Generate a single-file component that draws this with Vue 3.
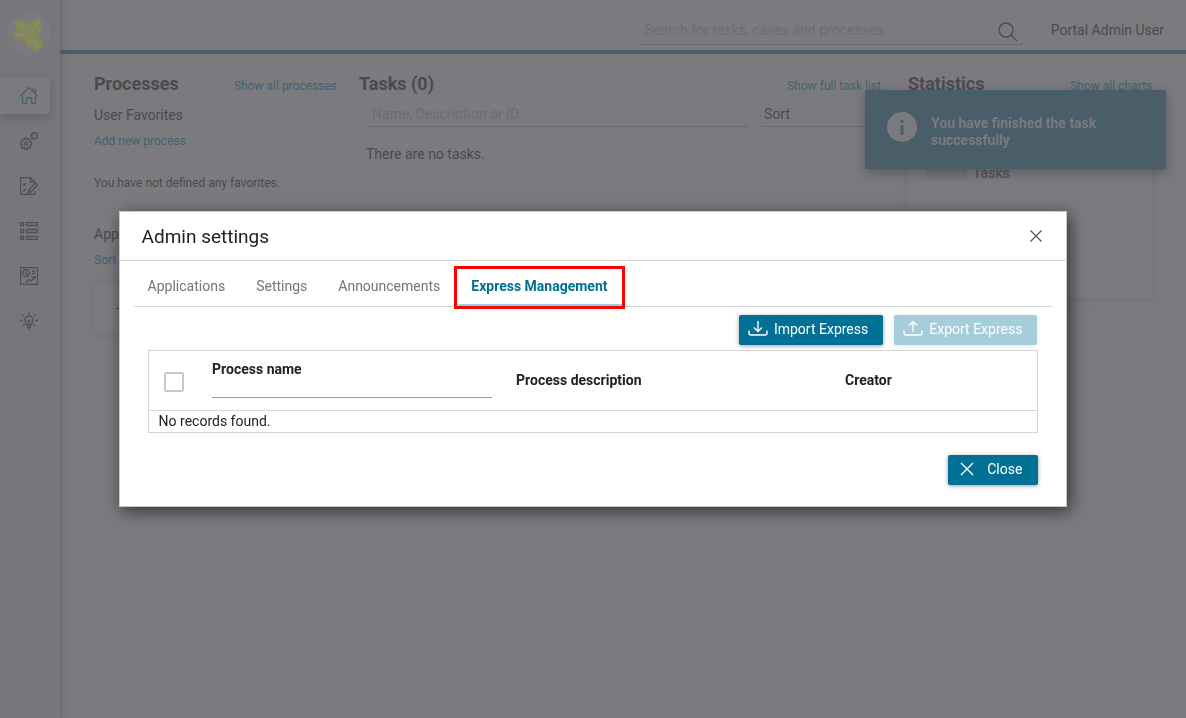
<template>
    <div class="portal">
        <aside class="sidebar">
            <svg class="logo" viewBox="0 0 42 42">
                <circle cx="21" cy="21" r="20.5" fill="#7a797e" stroke="#848388" stroke-dasharray="3 2" />
                <path d="M7 8c4-2 10 0 12 4 3-4 8-7 14-6 2 6 1 12-3 16 4 3 6 7 5 12-4 0-5 2-6 5-5-1-11-4-11-10-6-1-12-2-13-8 1-3 3-3 3-6-1-2-2-5-1-7z" fill="#84875a" />
                <path d="M9 10l9 10M31 8L21 20M8 21l11 1M23 24l7 12M12 12v4M15 11v4M28 10v4h4M25 14v4M12 19l-2 4M16 20l-2 5M24 29h-4M27 27v5h5" fill="none" stroke="#959780" stroke-width="0.6" />
            </svg>
            <nav class="menu">
                <a
                    v-for="item in menu"
                    :key="item.id"
                    href="#"
                    class="menu-item"
                    :class="{ active: item.id === 'home' }"
                    :aria-label="item.id"
                >
                    <svg viewBox="0 0 18 18"><path :d="item.icon" /></svg>
                </a>
            </nav>
        </aside>

        <div class="page">
            <header class="topbar">
                <div class="search">
                    <input type="text" aria-label="Search" placeholder="Search for tasks, cases and processes">
                    <svg viewBox="0 0 20 20">
                        <circle cx="8" cy="8" r="7" />
                        <path d="M13 13l6 6" />
                    </svg>
                </div>
                <a href="#" class="user">Portal Admin User</a>
            </header>

            <main class="columns">
                <section class="processes">
                    <div class="section-head">
                        <h2>Processes</h2>
                        <a href="#">Show all processes</a>
                    </div>
                    <h3>User Favorites</h3>
                    <a href="#" class="small-link">Add new process</a>
                    <p class="hint">You have not defined any favorites.</p>
                    <h3>Applications</h3>
                    <a href="#" class="small-link">Sort</a>
                    <div class="process-card">-</div>
                </section>

                <section class="tasks">
                    <div class="section-head">
                        <h2>Tasks (0)</h2>
                        <a href="#">Show full task list</a>
                    </div>
                    <div class="filters">
                        <input type="text" aria-label="Filter tasks" placeholder="Name, Description or ID">
                        <button type="button" class="sort">Sort</button>
                    </div>
                    <p class="empty">There are no tasks.</p>
                </section>

                <section class="statistics">
                    <div class="section-head">
                        <h2>Statistics</h2>
                        <a href="#">Show all charts</a>
                    </div>
                    <div class="chart-card">
                        <div class="legend">
                            <span class="swatch"></span>
                            <span>Tasks</span>
                        </div>
                    </div>
                </section>
            </main>
        </div>

        <div class="toast" role="status">
            <span class="toast-icon">
                <svg viewBox="0 0 30 30">
                    <circle cx="15" cy="15" r="15" fill="#7b7a7f" />
                    <path d="M13.5 8h3v3h-3zM13.5 13h3v10h-3z" fill="#495e69" />
                </svg>
            </span>
            <strong>You have finished the task successfully</strong>
        </div>

        <div class="overlay">
            <div class="dialog" role="dialog" aria-labelledby="dialog-title">
                <div class="dialog-head">
                    <h1 id="dialog-title">Admin settings</h1>
                    <button type="button" class="dismiss" aria-label="Dismiss">
                        <svg viewBox="0 0 12 12"><path d="M0.5 0.5l11 11M11.5 0.5l-11 11" /></svg>
                    </button>
                </div>

                <div class="tabs" role="tablist">
                    <button
                        v-for="tab in tabs"
                        :key="tab"
                        type="button"
                        role="tab"
                        class="tab"
                        :class="{ selected: tab === activeTab }"
                        :aria-selected="tab === activeTab"
                        @click="activeTab = tab"
                    >
                        {{ tab }}
                    </button>
                </div>

                <div class="dialog-body">
                    <div class="actions">
                        <button type="button" class="btn">
                            <svg viewBox="0 0 20 16"><path d="M10 0v10M6 6.5l4 4 4-4M1 9.5v2.5q0 2 2 2h14q2 0 2-2V9.5" /></svg>
                            Import Express
                        </button>
                        <button type="button" class="btn" disabled>
                            <svg viewBox="0 0 20 16"><path d="M10 11V1M6 4.5l4-4 4 4M1 9.5v2.5q0 2 2 2h14q2 0 2-2V9.5" /></svg>
                            Export Express
                        </button>
                    </div>

                    <table>
                        <thead>
                            <tr>
                                <th class="col-check"><input type="checkbox" aria-label="Select all"></th>
                                <th class="col-name">
                                    <label for="name-filter">Process name</label>
                                    <input id="name-filter" type="text">
                                </th>
                                <th class="col-description">Process description</th>
                                <th>Creator</th>
                            </tr>
                        </thead>
                        <tbody>
                            <tr>
                                <td colspan="4">No records found.</td>
                            </tr>
                        </tbody>
                    </table>

                    <div class="dialog-foot">
                        <button type="button" class="btn close">
                            <svg viewBox="0 0 14 14"><path d="M1 1l12 12M13 1L1 13" /></svg>
                            Close
                        </button>
                    </div>
                </div>
            </div>
        </div>
    </div>
</template>

<script setup>
import { ref } from 'vue'

const tabs = ['Applications', 'Settings', 'Announcements', 'Express Management']
const activeTab = ref('Express Management')

const menu = [
    {
        id: 'home',
        icon: 'M0.5 9L9 0.5 17.5 9M12 2.5h3.500v4M2.500 9v7.500h4v-5.500h5v5.500h4V9'
    },
    {
        id: 'processes',
        icon: 'M5 6h2l.4 1.600 1.600-.6 1.500 1.500-.8 1.500 1.800.7v2l-1.800.7.8 1.500L9 16.400l-1.600-.8L7 17.500H5l-.6-1.900-1.500.8-1.500-1.500.8-1.500-1.700-.7v-2l1.700-.7-.8-1.500L2.900 7l1.500.6zM4.500 11.700a1.500 1.500 0 1 0 3 0a1.500 1.500 0 1 0-3 0M13 .5h2l.4 1.200 1.600.2.500 1.700-1 1 .3 1.400-1.500 1-1.300-.8-1.500.8-1.300-1.200.6-1.300-.9-1.200.8-1.600 1.200.1zM13.500 3.700h1'
    },
    {
        id: 'tasks',
        icon: 'M15 7V5L10.500 .5H2Q.5 .5 .5 2v14q0 1.500 1.500 1.500h12q1 0 1-1V14M10.500 .5V5H15M3 7.500l1 1 2-2.500M3 13l1 1 2-2.500M8 16l1-3.500L15.500 6l2 2L11 14.800zM9 12.500l2 2'
    },
    {
        id: 'cases',
        icon: 'M.5 .5h3v3h-3zM6.500 .5h11v3h-11zM.5 7.500h3v3h-3zM6.500 7.500h11v3h-11zM.5 14.500h3v3h-3zM6.500 14.500h11v3h-11z'
    },
    {
        id: 'statistics',
        icon: 'M.5 .5h17v17H.5zM6 2.500a3.500 3.500 0 1 0 .1 0zM6 2.500V6l2 2.500M12 4h3M12 6.500h3M6 15.500l3-3 2 1.500 4-4M12.500 10H15v2'
    },
    {
        id: 'tips',
        icon: 'M7 13.500C7 11.500 5 11 5 8a4 4 0 0 1 8 0c0 3-2 3.500-2 5.500zM7 15.500h4M8 17.500h2M9 13V9.500L7.500 8M9 9.500L10.500 8M9 0v2M2.500 2.500L4 4M15.500 2.500L14 4M0 8.500h2.500M15.500 8.500H18M3 14l1.500-1.500M15 14l-1.500-1.500'
    }
]
</script>

<style>
body {
    margin: 0;
    background: #7b7a7f;
}
</style>

<style scoped>
* {
    box-sizing: border-box;
}

.portal {
    display: flex;
    min-height: 100vh;
    font-family: Roboto, "Liberation Sans", sans-serif;
    font-size: 14px;
    line-height: 16px;
    color: #4b4a4f;
    background: #7b7a7f;
}

a {
    color: #44626f;
    text-decoration: none;
}

input,
button {
    font: inherit;
    outline: none;
}

h1,
h2,
h3,
p {
    margin: 0;
}

svg {
    display: block;
    fill: none;
    stroke: currentColor;
}

/* Sidebar */
.sidebar {
    flex: 0 0 60px;
    background: #77767b;
    box-shadow: 0 0 8px rgba(40, 40, 45, 0.35);
}

.logo {
    width: 42px;
    height: 42px;
    margin: 13px 0 22px 8px;
    stroke: none;
}

.menu {
    display: flex;
    flex-direction: column;
    gap: 8px;
}

.menu-item {
    display: flex;
    align-items: center;
    width: 50px;
    height: 37px;
    padding-left: 20px;
    color: #505054;
}

.menu-item svg {
    width: 18px;
    height: 18px;
    stroke-width: 1.3;
}

.menu-item.active {
    color: #44626f;
    background: #7b7a7f;
    border-radius: 0 4px 4px 0;
    box-shadow: 0 4px 10px rgba(50, 50, 55, 0.25);
}

/* Top bar */
.page {
    flex: 1;
    min-width: 0;
}

.topbar {
    display: flex;
    justify-content: flex-end;
    gap: 28px;
    height: 54px;
    padding: 16px 22px 0 0;
    border-bottom: 4px solid #495e69;
}

.search {
    display: flex;
    justify-content: space-between;
    width: 383px;
    height: 29px;
    padding: 0 5px;
    border-bottom: 1px solid #6a696d;
}

.search input {
    flex: 1;
    height: 28px;
    padding: 0;
    border: 0;
    background: transparent;
}

.search svg {
    width: 20px;
    height: 20px;
    margin-top: 6px;
    color: #4b4a4f;
    stroke-width: 1.3;
}

input::placeholder {
    color: #6d6c71;
    opacity: 1;
}

.user {
    line-height: 28px;
    color: #4b4a4f;
}

/* Dashboard */
.columns {
    display: grid;
    grid-template-columns: 243fr 527fr 244fr;
    gap: 22px;
    padding: 20px 34px;
}

.section-head {
    display: flex;
    justify-content: space-between;
    align-items: baseline;
    height: 20px;
}

.section-head h2 {
    font-size: 18px;
    line-height: 20px;
    font-weight: 700;
}

.section-head a,
.small-link {
    font-size: 12px;
}

h3 {
    margin-top: 13px;
    font-size: 14px;
    line-height: 16px;
    font-weight: 400;
}

.small-link {
    display: block;
    margin-top: 10px;
}

.hint {
    margin: 26px 0 35px;
    font-size: 12px;
}

.process-card {
    height: 50px;
    margin-top: 15px;
    padding: 17px 22px;
    border-radius: 4px;
    background: #7c7b80;
    box-shadow: 0 1px 6px rgba(50, 50, 55, 0.15);
}

.tasks {
    padding-right: 5px;
}

.filters {
    display: flex;
    gap: 14px;
    margin: 8px 0 0 7px;
}

.filters input,
.sort {
    height: 25px;
    border: 0;
    border-bottom: 1px solid #69686d;
    background: transparent;
    color: #4b4a4f;
}

.filters input {
    flex: 1;
    padding: 0 6px;
}

.sort {
    width: 119px;
    padding: 0 2px;
    text-align: left;
}

.empty {
    margin: 19px 0 0 7px;
}

.chart-card {
    height: 192px;
    margin-top: 12px;
    padding: 59px 19px;
    border-radius: 4px;
    background: #7c7b80;
    box-shadow: 0 1px 8px rgba(50, 50, 55, 0.12);
}

.legend {
    display: flex;
    gap: 6px;
}

.swatch {
    width: 40px;
    height: 16px;
    background: #757479;
}

/* Notification */
.toast {
    position: fixed;
    top: 90px;
    right: 20px;
    display: flex;
    gap: 14px;
    width: 301px;
    padding: 22px 22px 20px;
    border-radius: 2px;
    color: #7b7a7f;
    background: #495e69;
    box-shadow: 0 4px 12px rgba(50, 50, 55, 0.45);
}

.toast-icon svg {
    width: 30px;
    height: 30px;
    stroke: none;
}

.toast strong {
    padding-top: 3px;
    line-height: 17px;
}

/* Dialog */
.overlay {
    position: fixed;
    inset: 0;
    display: flex;
    align-items: center;
    justify-content: center;
}

.dialog {
    width: 80%;
    border: 1px solid #c8c8c8;
    background: #fff;
    color: #212121;
    box-shadow: 3px 4px 16px rgba(0, 0, 0, 0.6);
}

.dialog-head {
    display: flex;
    align-items: center;
    justify-content: space-between;
    height: 49px;
    padding: 0 22px;
    border-bottom: 1px solid #d6d6d6;
}

.dialog-head h1 {
    padding-top: 2px;
    font-size: 19px;
    line-height: 22px;
    font-weight: 400;
}

.dismiss {
    padding: 2px;
    border: 0;
    background: transparent;
    color: #5d5d5d;
}

.dismiss svg {
    width: 12px;
    height: 12px;
    stroke-width: 1.4;
}

.tabs {
    display: flex;
    gap: 3px;
    margin: 8px 14px 0;
    border-bottom: 1px solid #d6d6d6;
}

.tab {
    height: 37px;
    padding: 0 14px 2px;
    border: 0;
    border-bottom: 2px solid transparent;
    background: transparent;
    color: #757575;
}

.tab.selected {
    border-bottom-color: #8cd5e3;
    outline: 3px solid #f00;
    color: #007095;
    font-weight: 700;
}

.dialog-body {
    padding: 8px 28px 21px;
}

.actions {
    display: flex;
    justify-content: flex-end;
    gap: 11px;
    margin-bottom: 5px;
    padding-right: 1px;
}

.btn {
    display: flex;
    align-items: center;
    gap: 6px;
    height: 30px;
    padding: 0 15px 2px 9px;
    border: 0;
    border-radius: 2px;
    background: #007095;
    color: #fff;
    box-shadow: 0 1px 4px rgba(0, 0, 0, 0.4);
}

.btn svg {
    width: 20px;
    height: 16px;
    stroke-width: 1.4;
}

.btn:disabled {
    background: #a6cdda;
    box-shadow: 0 1px 4px rgba(0, 0, 0, 0.1);
}

.close {
    gap: 13px;
    padding: 0 16px 2px 12px;
}

.close svg {
    width: 14px;
    height: 14px;
}

table {
    width: 100%;
    table-layout: fixed;
    border-collapse: collapse;
    border: 1px solid #d6d6d6;
}

th {
    height: 60px;
    padding: 0 10px 2px;
    text-align: left;
    font-weight: 700;
}

.col-check {
    width: 54px;
    padding: 2px 0 0 15px;
}

.col-name {
    width: 304px;
}

.col-description {
    width: 329px;
}

th input[type="checkbox"] {
    display: block;
    appearance: none;
    width: 20px;
    height: 20px;
    margin: 0;
    border: 2px solid #c8c8c8;
    border-radius: 2px;
}

.col-name label {
    display: block;
}

.col-name input {
    display: block;
    width: 280px;
    height: 21px;
    padding: 0;
    border: 0;
    border-bottom: 1px solid #999;
    background: transparent;
}

td {
    height: 22px;
    padding: 0 10px 2px;
    border-top: 1px solid #d6d6d6;
}

.dialog-foot {
    display: flex;
    justify-content: flex-end;
    margin-top: 22px;
}
</style>
